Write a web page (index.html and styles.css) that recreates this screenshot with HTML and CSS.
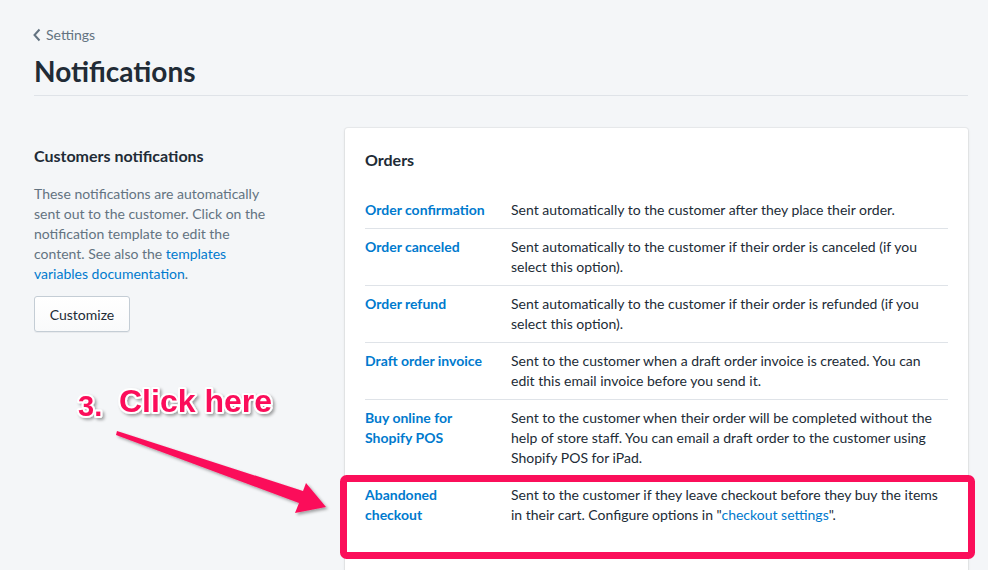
FILE: index.html
```html
<!DOCTYPE html>
<html lang="en">
<head>
<meta charset="utf-8">
<title>Notifications</title>
<link rel="stylesheet" href="styles.css">
</head>
<body>
<div class="page">
  <header class="page-header">
    <a class="back" href="#">
      <svg class="back-icon" width="10" height="14" viewBox="0 0 10 14"><path d="M7.5 1.5 L2.5 7 L7.5 12.5" fill="none" stroke="#637381" stroke-width="2"/></svg>
      <span>Settings</span>
    </a>
    <h1 class="title">Notifications</h1>
  </header>

  <main class="layout">
    <section class="annotation">
      <h2 class="section-title">Customers notifications</h2>
      <p class="section-text">These notifications are automatically sent out to the customer. Click on the notification template to edit the content. See also the <a href="#">templates variables documentation</a>.</p>
      <button class="btn">Customize</button>
    </section>

    <section class="card">
      <h3 class="card-title">Orders</h3>
      <div class="rows">
        <div class="row"><a class="label" href="#">Order confirmation</a><p class="desc">Sent automatically to the customer after they place their order.</p></div>
        <div class="row"><a class="label" href="#">Order canceled</a><p class="desc">Sent automatically to the customer if their order is canceled (if you select this option).</p></div>
        <div class="row"><a class="label" href="#">Order refund</a><p class="desc">Sent automatically to the customer if their order is refunded (if you select this option).</p></div>
        <div class="row"><a class="label" href="#">Draft order invoice</a><p class="desc">Sent to the customer when a draft order invoice is created. You can edit this email invoice before you send it.</p></div>
        <div class="row"><a class="label" href="#">Buy online for Shopify POS</a><p class="desc">Sent to the customer when their order will be completed without the help of store staff. You can email a draft order to the customer using Shopify POS for iPad.</p></div>
        <div class="row"><a class="label" href="#">Abandoned checkout</a><p class="desc">Sent to the customer if they leave checkout before they buy the items in their cart. Configure options in "<a href="#">checkout settings</a>".</p></div>
        <div class="row row-empty"></div>
      </div>
    </section>
  </main>

  <svg class="overlay" width="988" height="570" viewBox="0 0 988 570">
    <defs>
      <filter id="sh" x="-20%" y="-20%" width="140%" height="140%">
        <feDropShadow dx="2" dy="2" stdDeviation="1.5" flood-color="#000" flood-opacity="0.35"/>
      </filter>
    </defs>
    <g filter="url(#sh)">
      <text class="ann-num" x="78" y="416">3.</text>
      <text class="ann-text" x="119" y="412">Click here</text>
      <polygon class="arrow" points="117,431 303,491 306,483 326,507 295,513 299,503 116,435"/>
    </g>
    <rect class="hl" x="343.5" y="478.5" width="628" height="77" rx="3"/>
  </svg>
</div>
</body>
</html>
```

FILE: styles.css
```css
* { box-sizing: border-box; }
html, body { margin: 0; padding: 0; }
body {
  background: #f4f6f8;
  font-family: "Lato", "Open Sans", sans-serif;
  font-size: 14px;
  color: #212b36;
  width: 988px;
  height: 570px;
  overflow: hidden;
}
a { color: #007ace; text-decoration: none; }
.page {
  position: relative;
  padding: 25px 20px 0 34px;
}
.page-header {
  border-bottom: 1px solid #dfe3e8;
  padding-bottom: 8px;
}
.back {
  display: flex;
  align-items: center;
  gap: 4px;
  height: 20px;
  line-height: 20px;
  color: #637381;
  font-size: 14px;
  margin-left: -2px;
}
.back-icon { display: block; }
.title {
  margin: 10px 0 0;
  font-size: 28px;
  line-height: 32px;
  font-weight: 700;
  color: #212b36;
}
.layout {
  display: grid;
  grid-template-columns: 311px 1fr;
  margin-top: 32px;
}
.annotation { padding-top: 16px; }
.section-title {
  margin: 0;
  font-size: 16px;
  line-height: 24px;
  font-weight: 700;
}
.section-text {
  margin: 16px 0 12px;
  width: 236px;
  line-height: 20px;
  color: #637381;
}
.btn {
  display: block;
  width: 96px;
  height: 36px;
  border: 1px solid #c4cdd5;
  border-radius: 3px;
  background: linear-gradient(#fff, #f9fafb);
  box-shadow: 0 1px 0 rgba(22,29,37,.05);
  font-family: inherit;
  font-size: 14px;
  color: #212b36;
  padding: 0;
}
.card {
  background: #fff;
  border-radius: 3px;
  box-shadow: 0 0 0 1px rgba(63,63,68,.05), 0 1px 3px 0 rgba(63,63,68,.15);
  padding: 20px 20px 0;
  height: 460px;
}
.card-title {
  margin: 0 0 20px;
  font-size: 16px;
  line-height: 24px;
  font-weight: 700;
}
.row {
  display: grid;
  grid-template-columns: 146px 1fr;
  padding: 8px 0;
  border-top: 1px solid #dfe3e8;
  line-height: 20px;
}
.row:first-child { border-top: 0; }
.row-empty { border-top: 0; }
.label {
  font-weight: 700;
  width: 128px;
}
.desc { margin: 0; padding-right: 6px; }
.overlay {
  position: absolute;
  left: 0;
  top: 0;
  pointer-events: none;
}
.ann-num, .ann-text {
  font-family: "Liberation Sans", Arial, sans-serif;
  font-weight: 700;
  fill: #fb0f5a;
  stroke: #fff;
  stroke-width: 4px;
  paint-order: stroke;
  stroke-linejoin: round;
}
.ann-num { font-size: 29px; }
.ann-text { font-size: 32px; }
.arrow { fill: #fb0f5a; }
.hl {
  fill: none;
  stroke: #fb0f5a;
  stroke-width: 7px;
}
```
